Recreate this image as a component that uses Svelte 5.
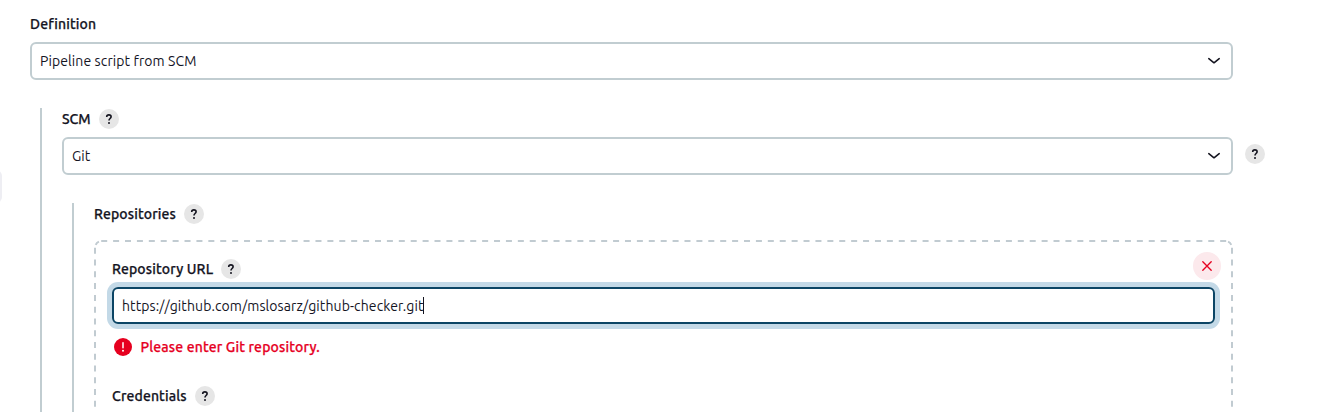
<script>
  let definition = 'Pipeline script from SCM';
  let scm = 'Git';
  let url = 'https://github.com/mslosarz/github-checker.git';
</script>

{#snippet help()}
  <span class="help">
    <svg width="20" height="20" viewBox="0 0 20 20" fill="none">
      <path d="M7.7 7.9C7.7 6.6 8.6 5.9 9.9 5.9s2.2.7 2.2 1.8c0 1.8-2.1 1.8-2.1 3.7" stroke="#14141f" stroke-width="1.6" />
      <circle cx="10" cy="13.9" r="1" fill="#14141f" />
    </svg>
  </span>
{/snippet}

{#snippet chevron()}
  <svg class="chevron" width="14" height="8" viewBox="0 0 14 8" fill="none">
    <path d="M1.8 1.7L7 5.8L12.2 1.7" stroke="#14141f" stroke-width="1.6" stroke-linecap="round" stroke-linejoin="round" />
  </svg>
{/snippet}

<main>
  <span class="side-tab"></span>
  <div class="label"><span class="wide">Definition</span></div>
  <div class="select"><span class="text">{definition}</span>{@render chevron()}</div>

  <section class="nested">
    <div class="label"><span>SCM</span>{@render help()}</div>
    <div class="select-row">
      <div class="select"><span>{scm}</span>{@render chevron()}</div>
      {@render help()}
    </div>

    <section class="nested">
      <div class="label"><span class="wide">Repositories</span>{@render help()}</div>
      <div class="repository">
        <svg class="outline" width="1139" height="560" viewBox="0 0 1139 560" fill="none" stroke="#c1cbd1" stroke-width="2">
          <path d="M7.2 1H1133" stroke-dasharray="6 5.904" />
          <path d="M1 7.8V560" stroke-dasharray="6 5.77" />
          <path d="M1138 7.8V560" stroke-dasharray="6 5.77" />
          <path d="M1.7 4.9Q2.7 2.7 4.9 1.7M1134.1 1.7Q1136.3 2.7 1137.3 4.9" />
        </svg>
        <div class="label">
          <span class="wide">Repository URL</span>{@render help()}
          <span class="remove">
            <svg width="28" height="28" viewBox="0 0 28 28" fill="none">
              <path d="M9.8 9.8L18.2 18.2M18.2 9.8L9.8 18.2" stroke="#e6001f" stroke-width="1.35" stroke-linecap="round" />
            </svg>
          </span>
        </div>
        <div class="input"><span class="text">{url}</span><i class="caret"></i></div>
        <div class="error">
          <svg width="18" height="18" viewBox="0 0 18 18">
            <circle cx="9" cy="9" r="9" fill="#e6001f" />
            <path d="M9 4.7V9.8" stroke="#fff" stroke-width="1.5" stroke-linecap="round" />
            <circle cx="9" cy="12.8" r="1" fill="#fff" />
          </svg>
          <span>Please enter Git repository.</span>
        </div>
        <div class="label"><span class="wide">Credentials</span>{@render help()}</div>
      </div>
    </section>
  </section>
</main>

<style>
  :global(body) {
    margin: 0;
    background: #fff;
  }
  main {
    position: relative;
    box-sizing: border-box;
    height: 412px;
    overflow: hidden;
    padding: 13px 100px 0 30px;
    font: 14px/22px "Ubuntu", "Noto Sans", sans-serif;
    color: #14141f;
  }
  main span {
    white-space: nowrap;
  }
  .wide {
    letter-spacing: 0.14px;
  }
  .text {
    letter-spacing: 0.1px;
  }
  .side-tab {
    position: absolute;
    left: -14px;
    top: 170px;
    width: 16px;
    height: 33px;
    border-radius: 6px;
    background: #eeeef3;
  }
  .label {
    position: relative;
    display: flex;
    align-items: center;
    gap: 8px;
    height: 22px;
    margin-bottom: 7px;
    font-weight: 500;
    -webkit-text-stroke: 0.25px currentColor;
  }
  .select,
  .input {
    box-sizing: border-box;
    display: flex;
    align-items: center;
    height: 38px;
    padding: 0 10px 0 8px;
    border: 2px solid #c1cdd1;
    border-radius: 6px;
  }
  .chevron {
    margin-left: auto;
  }
  .nested {
    box-sizing: border-box;
    margin: 28px 0 0 10px;
    padding-left: 20px;
    border-left: 2px solid #c1cdd1;
    height: 700px;
  }
  .select-row {
    display: flex;
    align-items: center;
    gap: 12px;
    margin-right: -32px;
  }
  .select-row .select {
    flex: 1;
  }
  .select-row > .help,
  .select-row > :global(.help) {
    margin-top: -4px;
  }
  .help {
    flex: none;
    width: 20px;
    height: 20px;
    border-radius: 50%;
    background: #e6e6e6;
  }
  .help svg,
  .remove svg {
    display: block;
  }
  .repository {
    position: relative;
    box-sizing: border-box;
    height: 560px;
    margin-top: 15px;
    padding: 18px;
  }
  .outline {
    position: absolute;
    inset: 0;
  }
  .remove {
    position: absolute;
    right: -6px;
    top: -6px;
    width: 28px;
    height: 28px;
    border-radius: 50%;
    background: #fce9ec;
  }
  .input {
    height: 37px;
    border-color: #0b4565;
    box-shadow: 0 0 0 5px #c3d9e7;
  }
  .caret {
    width: 1px;
    height: 17px;
    margin-left: -0.5px;
    background: #14141f;
  }
  .error {
    display: flex;
    align-items: center;
    gap: 8.5px;
    height: 22px;
    margin: 12px 0 27px 2px;
    color: #e6001f;
    font-weight: 500;
    letter-spacing: 0.15px;
    -webkit-text-stroke: 0.25px currentColor;
  }
</style>
